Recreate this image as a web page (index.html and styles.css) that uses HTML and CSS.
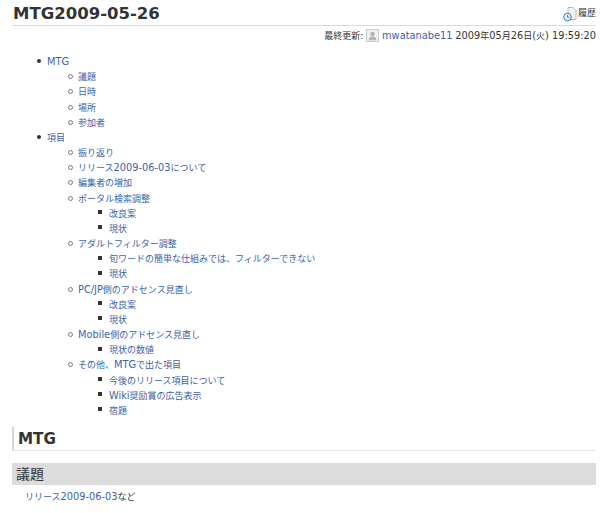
FILE: index.html
```
<!DOCTYPE html>
<html lang="ja">
<head>
<meta charset="utf-8">
<title>MTG2009-05-26</title>
<link rel="stylesheet" href="styles.css">
</head>
<body>
<div class="page">
  <div class="title-row">
    <h1>MTG2009-05-26</h1>
    <a class="history" href="#">
      <svg class="history-icon" width="16" height="16" viewBox="0 0 16 16"><path d="M6 1.500h5l3 3v9H6z" fill="#eef3f8" stroke="#a9bccd"/><circle cx="5.500" cy="11" r="3.800" fill="#e8f1f8" stroke="#3f7fa8"/><path d="M5.500 9v2.200h2" fill="none" stroke="#3f7fa8"/></svg>
      <span>履歴</span>
    </a>
  </div>
  <div class="meta">最終更新: <svg class="avatar" width="13" height="13" viewBox="0 0 14 14"><rect x=".5" y=".5" width="13" height="13" fill="#f2f2f2" stroke="#c8c8c8"/><circle cx="7" cy="5.500" r="2.500" fill="#b5b5b5"/><path d="M3 12c0-3 1.500-4 4-4s4 1 4 4z" fill="#b5b5b5"/></svg> <a class="lat" href="#">mwatanabe11</a> <span class="lat">2009</span>年<span class="lat">05</span>月<span class="lat">26</span>日<span class="lat">(</span>火<span class="lat">) 19:59:20</span></div>
  <ul class="toc">
    <li><a href="#"><span class="lat">MTG</span></a>
      <ul>
        <li><a href="#">議題</a></li>
        <li><a href="#">日時</a></li>
        <li><a href="#">場所</a></li>
        <li><a href="#">参加者</a></li>
      </ul>
    </li>
    <li><a href="#">項目</a>
      <ul>
        <li><a href="#">振り返り</a></li>
        <li><a href="#">リリース<span class="lat">2009-06-03</span>について</a></li>
        <li><a href="#">編集者の増加</a></li>
        <li><a href="#">ポータル検索調整</a>
          <ul>
            <li><a href="#">改良案</a></li>
            <li><a href="#">現状</a></li>
          </ul>
        </li>
        <li><a href="#">アダルトフィルター調整</a>
          <ul>
            <li><a href="#">旬ワードの簡単な仕組みでは、フィルターできない</a></li>
            <li><a href="#">現状</a></li>
          </ul>
        </li>
        <li><a href="#"><span class="lat">PC/JP</span>側のアドセンス見直し</a>
          <ul>
            <li><a href="#">改良案</a></li>
            <li><a href="#">現状</a></li>
          </ul>
        </li>
        <li><a href="#"><span class="lat">Mobile</span>側のアドセンス見直し</a>
          <ul>
            <li><a href="#">現状の数値</a></li>
          </ul>
        </li>
        <li><a href="#">その他、<span class="lat">MTG</span>で出た項目</a>
          <ul>
            <li><a href="#">今後のリリース項目について</a></li>
            <li><a href="#"><span class="lat">Wiki</span>奨励賞の広告表示</a></li>
            <li><a href="#">宿題</a></li>
          </ul>
        </li>
      </ul>
    </li>
  </ul>
  <h2>MTG</h2>
  <h3>議題</h3>
  <p><a href="#">リリース<span class="lat">2009-06-03</span></a>など</p>
</div>
</body>
</html>
```

FILE: styles.css
```
html, body {
  margin: 0;
  padding: 0;
  background: #fff;
}
body {
  font-family: "DejaVu Sans", "Noto Sans CJK JP", sans-serif;
  font-size: 9px;
  line-height: 15.170px;
  color: #333;
  overflow: hidden;
}
a {
  color: #3b63a8;
  text-decoration: none;
}
.lat {
  font-size: 9.800px;
  line-height: 1;
}
.page {
  padding: 0 4px 0 12px;
}
.title-row {
  display: flex;
  justify-content: space-between;
  align-items: center;
  height: 25px;
  border-bottom: 1px solid #d0dbe2;
}
h1 {
  margin: 0;
  padding: 3px 0 0 1px;
  font-size: 16.500px;
  line-height: 22px;
  font-weight: bold;
  color: #333;
}
.history {
  display: flex;
  align-items: center;
  gap: 0;
  color: #333;
  padding-top: 3px;
}
.history-icon {
  display: block;
}
.meta {
  text-align: right;
  height: 20px;
  line-height: 20px;
  color: #333;
  white-space: nowrap;
}
.avatar {
  vertical-align: -3px;
}
ul {
  margin: 0;
  padding: 0 0 0 31px;
  list-style: none;
}
.toc {
  margin-top: 9px;
  padding-left: 35px;
}
.toc li {
  position: relative;
}
.toc li::before {
  content: "";
  position: absolute;
  left: -10px;
  top: 4px;
  width: 4px;
  height: 4px;
  border-radius: 50%;
  background: #333;
}
.toc ul li::before {
  box-sizing: border-box;
  left: -10.500px;
  width: 5px;
  height: 5px;
  background: #fff;
  border: 1px solid #777;
}
.toc ul ul li::before {
  left: -11px;
  top: 3.500px;
  width: 4px;
  height: 4px;
  border: 0;
  border-radius: 0;
  background: #333;
}
h2 {
  margin: 8px 0 0;
  padding-left: 4px;
  height: 23px;
  line-height: 25px;
  font-size: 15.200px;
  font-weight: bold;
  color: #333;
  border-left: 2px solid #d0dbe2;
  border-bottom: 1px solid #e4e8ec;
}
h3 {
  margin: 12px 0 0;
  padding-left: 4px;
  height: 22px;
  line-height: 22px;
  font-size: 14px;
  font-weight: normal;
  color: #333;
  background: #dcdcdc;
}
p {
  margin: 5px 0 0 13px;
}
```
